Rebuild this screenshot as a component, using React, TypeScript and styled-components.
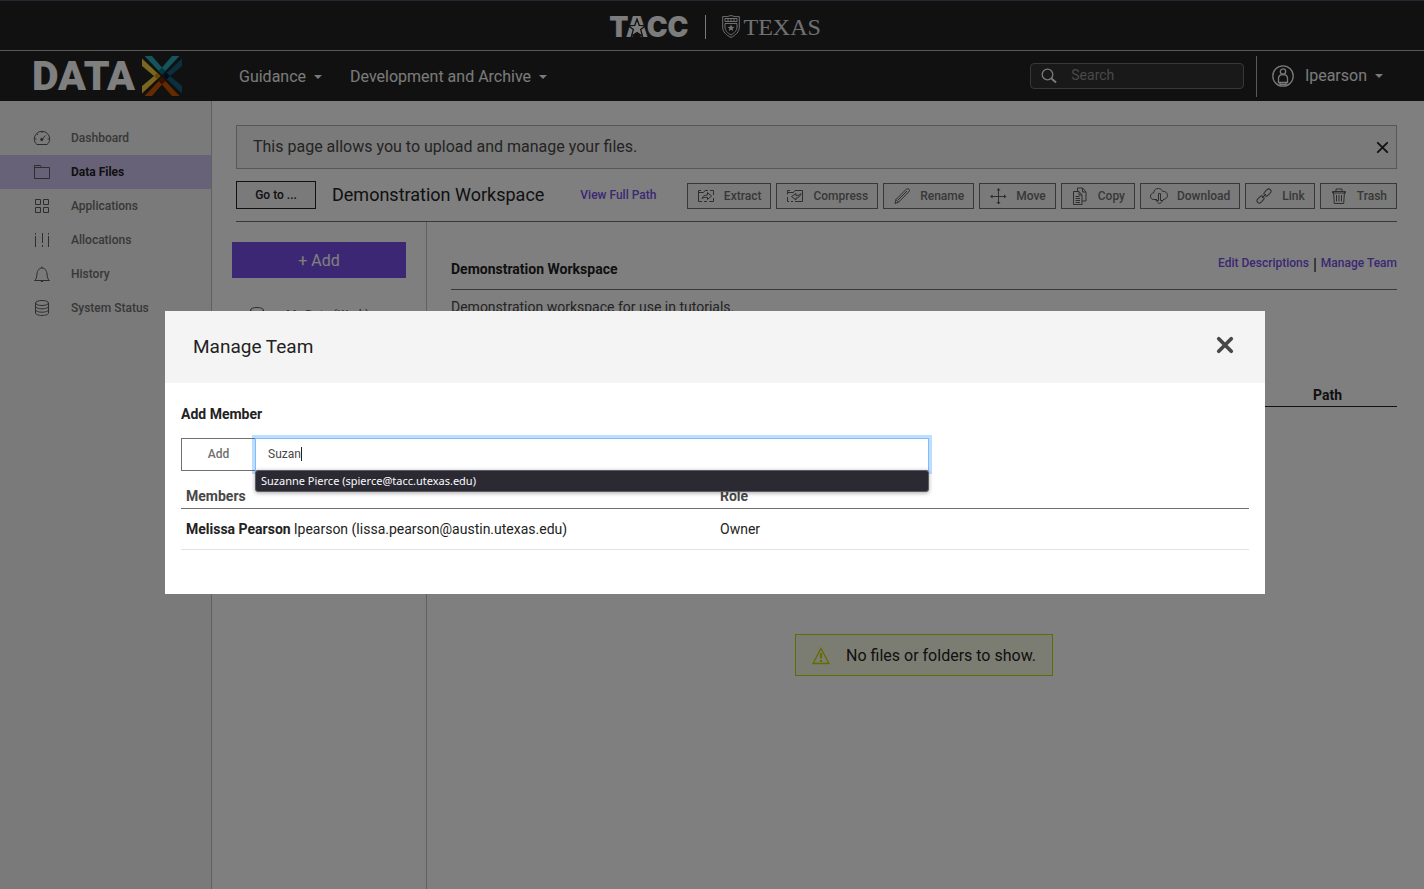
import React, { useState } from "react";
import styled, { createGlobalStyle, css } from "styled-components";

const color = {
  ink: "#222222",
  text: "#484848",
  icon: "#5c5c5c",
  muted: "#707070",
  accent: "#784fe8",
  surface: "#f4f4f4",
  active: "#d0c4f0",
  line: "#c0c0c0",
};

const GlobalStyle = createGlobalStyle`
  *, *::before, *::after { box-sizing: border-box; }
  body {
    margin: 0;
    background: #fff;
    color: ${color.text};
    font-family: Roboto, "Liberation Sans", sans-serif;
    font-size: 14px;
    line-height: 20px;
  }
  button, input { font-family: inherit; margin: 0; }
  a { text-decoration: none; }
`;

const Page = styled.div`
  display: flex;
  flex-direction: column;
  min-height: 100vh;
`;

/* ---------- Branding and navigation ---------- */

const BrandBar = styled.div`
  display: flex;
  align-items: center;
  justify-content: center;
  gap: 16px;
  height: 51px;
  padding: 2px 0 0 6px;
  background: ${color.ink};
  color: #f8f8f8;
  border-top: 1px solid #4c4c60;
  border-bottom: 1px solid #b4b4b4;
`;

const BrandRule = styled.span`
  width: 1px;
  height: 24px;
  background: #f4f4f4;
`;

const TaccLogo = styled.a`
  display: flex;
  position: relative;
  color: inherit;
  font-family: Inter, sans-serif;
  font-size: 28px;
  font-weight: 900;
  line-height: 28px;
`;

const TaccStar = styled.svg`
  position: absolute;
  left: 18px;
  top: 5px;
`;

const TexasLogo = styled.a`
  display: flex;
  align-items: center;
  gap: 4px;
  color: #e0e0e0;
  font-family: "Liberation Serif", serif;
  font-size: 24px;
  line-height: 28px;
`;

const NavBar = styled.header`
  display: flex;
  align-items: center;
  height: 50px;
  padding: 0 41px 0 32px;
  background: ${color.ink};
  color: #f4f4f4;
`;

const SiteLogo = styled.a`
  display: flex;
  align-items: center;
  width: 207px;
  color: #fff;
  font-size: 41px;
  font-weight: 900;
  line-height: 48px;
`;

const SiteMark = styled.svg`
  margin-left: 7px;
`;

const NavLinks = styled.nav`
  display: flex;
  flex: 1;
  gap: 28px;
  padding-top: 2px;
`;

const NavLink = styled.button`
  display: flex;
  align-items: center;
  gap: 8px;
  padding: 0;
  border: 0;
  background: none;
  color: inherit;
  font-size: 16px;
  line-height: 24px;
`;

const Caret = styled.span`
  border: 4px solid transparent;
  border-top-color: currentColor;
  border-bottom: 0;
`;

const SearchBox = styled.label`
  display: flex;
  align-items: center;
  gap: 14px;
  width: 214px;
  height: 26px;
  padding: 0 10px;
  border: 1px solid #707070;
  border-radius: 4px;
  background: #333;
`;

const SearchInput = styled.input`
  flex: 1;
  min-width: 0;
  padding: 0 0 2px;
  border: 0;
  outline: 0;
  background: none;
  color: #fff;
  font-size: 14px;
  line-height: 20px;
  &::placeholder { color: #929292; opacity: 1; }
`;

const UserArea = styled.div`
  display: flex;
  align-items: center;
  height: 41px;
  margin-left: 12px;
  padding-left: 15px;
  border-left: 1px solid #b4b4b4;
`;

const UserButton = styled(NavLink)`
  svg { margin-right: 3px; }
`;

/* ---------- Workbench ---------- */

const Workbench = styled.div`
  display: flex;
  flex: 1;
`;

const Sidebar = styled.nav`
  flex: 0 0 212px;
  padding-top: 20px;
  background: ${color.surface};
  border-right: 1px solid ${color.line};
`;

const SidebarLink = styled.a<{ $active?: boolean }>`
  display: flex;
  align-items: center;
  gap: 20px;
  height: 34px;
  padding-left: 33px;
  color: ${color.muted};
  font-size: 12px;
  font-weight: 500;
  ${(p) => p.$active && css`
    background: ${color.active};
    color: ${color.ink};
    font-weight: 700;
  `}
`;

const Main = styled.main`
  display: flex;
  flex: 1;
  flex-direction: column;
  min-width: 0;
  padding: 24px 27px 0 20px;
`;

const MainHeader = styled.div`
  margin-left: 4px;
  border-bottom: 1px solid ${color.muted};
`;

const IntroMessage = styled.div`
  display: flex;
  align-items: center;
  justify-content: space-between;
  height: 44px;
  padding: 0 6px 0 16px;
  border: 1px solid #afafaf;
  background: ${color.surface};
  font-size: 16px;
  line-height: 24px;
`;

const CloseButton = styled.button<{ $tone?: string }>`
  display: flex;
  padding: 0;
  border: 0;
  background: none;
  color: ${(p) => p.$tone ?? color.ink};
`;

const TitleRow = styled.div`
  display: flex;
  align-items: flex-end;
  padding: 12px 0;
`;

const GoToButton = styled.button`
  width: 80px;
  height: 28px;
  padding: 0;
  border: 1px solid ${color.ink};
  background: ${color.surface};
  color: ${color.ink};
  font-size: 12px;
  font-weight: 500;
`;

const WorkspaceTitle = styled.h1`
  margin: 0 36px 0 16px;
  color: ${color.ink};
  font-size: 18px;
  font-weight: 400;
  line-height: 28px;
  white-space: nowrap;
`;

const TextLink = styled.a`
  color: ${color.accent};
  font-size: 12px;
  font-weight: 500;
  line-height: 28px;
  white-space: nowrap;
`;

const Toolbar = styled.div`
  display: flex;
  gap: 5px;
  margin-left: auto;
`;

const ToolButton = styled.button`
  display: flex;
  align-items: center;
  gap: 9px;
  height: 26px;
  padding: 0 9px;
  border: 1px solid ${color.muted};
  background: ${color.surface};
  color: ${color.muted};
  font-size: 12px;
  font-weight: 500;
  white-space: nowrap;
`;

const Columns = styled.div`
  display: flex;
  flex: 1;
`;

const SystemsColumn = styled.div`
  flex: 0 0 195px;
  padding: 20px 20px 0 0;
  border-right: 1px solid ${color.line};
`;

const AddButton = styled.button`
  display: block;
  width: 100%;
  height: 36px;
  border: 0;
  background: ${color.accent};
  color: #fff;
  font-size: 16px;
`;

const SystemLink = styled.a`
  display: flex;
  align-items: center;
  gap: 20px;
  height: 34px;
  margin-top: 20px;
  padding-left: 16px;
  color: ${color.muted};
  font-size: 12px;
  font-weight: 500;
`;

const FilesColumn = styled.section`
  flex: 1;
  min-width: 0;
  padding: 30px 0 0 24px;
`;

const ProjectHeader = styled.div`
  display: flex;
  align-items: flex-start;
  justify-content: space-between;
  height: 38px;
  border-bottom: 1px solid ${color.muted};
`;

const ProjectTitle = styled.h2`
  margin: 7px 0 0;
  color: ${color.ink};
  font-size: 14px;
  font-weight: 700;
  line-height: 20px;
`;

const ProjectLinks = styled.div`
  display: flex;
  gap: 4px;
  color: ${color.ink};
  font-size: 16px;
  line-height: 26px;
  ${TextLink} { line-height: 22px; }
`;

const Description = styled.p`
  margin: 7px 0 68px;
`;

const FilesTable = styled.table`
  width: 100%;
  border-collapse: collapse;
  th {
    width: 84px;
    padding: 0 0 1px;
    border-bottom: 1px solid ${color.ink};
    color: ${color.ink};
    font-weight: 700;
    text-align: left;
  }
  td { padding: 0; border-bottom: 1px solid ${color.ink}; }
`;

const EmptyNotice = styled.div`
  display: flex;
  align-items: center;
  gap: 16px;
  width: max-content;
  height: 42px;
  margin: 227px auto 0;
  padding: 2px 16px 0;
  border: 1px solid #c4d600;
  background: #f9fbe5;
  color: ${color.ink};
  font-size: 16px;
`;

/* ---------- Dialog ---------- */

const Backdrop = styled.div`
  position: fixed;
  inset: 0;
  display: flex;
  align-items: center;
  justify-content: center;
  padding: 16px 0 0 6px;
  background: rgba(0, 0, 0, 0.5);
`;

const Dialog = styled.section`
  width: 100%;
  max-width: 1100px;
  background: #fff;
`;

const DialogHeader = styled.header`
  display: flex;
  align-items: center;
  justify-content: space-between;
  height: 72px;
  padding: 0 30px 4px 28px;
  background: ${color.surface};
  h2 {
    margin: 4px 0 0;
    color: ${color.ink};
    font-size: 19px;
    font-weight: 400;
    line-height: 28px;
  }
`;

const DialogBody = styled.div`
  padding: 21px 16px 44px;
`;

const FieldLabel = styled.label`
  display: block;
  margin-bottom: 14px;
  color: ${color.ink};
  font-weight: 700;
`;

const InputGroup = styled.div`
  display: flex;
  width: 70%;
  height: 33px;
`;

const AddMemberButton = styled.button`
  width: 75px;
  margin-right: -1px;
  border: 1px solid ${color.muted};
  background: #fff;
  color: ${color.muted};
  font-size: 12px;
  font-weight: 500;
`;

const InputWrap = styled.div`
  position: relative;
  flex: 1;
`;

const MemberInput = styled.input`
  display: block;
  width: 100%;
  height: 33px;
  padding: 0 12px;
  border: 1px solid #80bdff;
  outline: 0;
  box-shadow: 0 0 0 3px rgba(0, 123, 255, 0.25);
  caret-color: transparent;
  color: ${color.text};
  font-size: 12px;
`;

const TextCaret = styled.span`
  position: absolute;
  top: 9px;
  left: 46px;
  width: 1px;
  height: 14px;
  background: ${color.ink};
`;

const Suggestions = styled.ul`
  position: absolute;
  top: 32px;
  left: 0;
  right: 0;
  margin: 0;
  padding: 0 5px;
  list-style: none;
  border: 1px solid #5c5b66;
  border-radius: 3px;
  background: #2b2a33;
  box-shadow: 0 1px 4px rgba(0, 0, 0, 0.35);
  color: #fbfbfe;
  font-family: "Noto Sans", sans-serif;
  font-size: 11px;
  line-height: 20px;
`;

const MembersTable = styled.table`
  width: 100%;
  margin-top: 12px;
  border-collapse: collapse;
  table-layout: fixed;
  th {
    height: 26px;
    padding: 0 5px;
    border-bottom: 1px solid ${color.muted};
    font-weight: 700;
    text-align: left;
  }
  td {
    height: 41px;
    padding: 0 5px;
    border-bottom: 1px solid #e2e2e2;
    color: ${color.ink};
  }
`;

/* ---------- Icons ---------- */

const paths: Record<string, React.ReactNode> = {
  dashboard: (
    <>
      <path d="M4 15.500h10c1.800-1.500 2.700-3 2.700-5.500A7.700 7.700 0 0 0 1.300 10c0 2.500.9 4 2.700 5.500z" />
      <path d="M8.500 11 12.500 6.500M9 2.500v1.500M4 5l1 1M2 10h1.500M14.500 10H16" />
      <circle cx="8.800" cy="10.500" r="1.200" fill="currentColor" />
    </>
  ),
  folder: <path d="M1.500 15.500v-13h6l1 2h8v11zM1.500 4.500h7" />,
  apps: <path d="M2.500 2.500h5v5h-5zM10.500 2.500h5v5h-5zM2.500 10.500h5v5h-5zM10.500 10.500h5v5h-5z" />,
  allocations: (
    <path d="M2.500 5v11M9.500 2v10M15.500 5v11M2.500 2v1.500M9.500 14v2M15.500 2v1.500" />
  ),
  bell: <path d="M1.500 15.500h15c-2-1.500-2-3-2.500-6.500-.4-3.500-2-6-5-6s-4.600 2.500-5 6c-.5 3.500-.5 5-2.500 6.500zM7.800 16.500h2.400M9 1.500v1.500" />,
  database: (
    <>
      <ellipse cx="9" cy="4" rx="6.500" ry="2.500" />
      <path d="M2.500 4v10c0 1.400 2.900 2.500 6.500 2.500s6.500-1.100 6.500-2.500V4M2.500 7.300c0 1.400 2.900 2.500 6.500 2.500s6.500-1.100 6.500-2.500M2.500 10.700c0 1.400 2.900 2.500 6.500 2.500s6.500-1.100 6.500-2.500" />
    </>
  ),
  extract: (
    <>
      <path d="M4 3.500H1.500v11H5M7 14.500h3M12.500 14.500h4V11M16.500 8V3.500H13M11 3.500H8L6.500 5.500h-5" />
      <path d="M5 11.500c1-2.500 2.500-3.500 5.500-3.500V5.500L14.500 9l-4 3.500V10.500c-2.500-.3-4 0-5.500 1z" />
    </>
  ),
  compress: (
    <>
      <path d="M4 3.500H1.500v4M1.500 10v4.500H3M5 14.500h2M9 14.500h7.500v-11H9L7.500 5.500h-6" />
      <path d="M15 6.500c-1 1.500-2.500 2-5 2V6.500L5.500 9.500l4.500 3.500v-2c2.500-.2 4-1.500 5-4.500z" />
    </>
  ),
  rename: <path d="M2 16.500 3 12.500 13.300 2.200c.8-.8 2-.6 2.600 0s.7 1.700 0 2.500L5.500 15.200zM3 12.500l2.500 2.700M5 13 14 4" />,
  move: (
    <>
      <path d="M9.500 2v14M2 9.500h15" />
      <path d="M7.500 3.500l2-2.500 2 2.500zM7.500 15l2 2.500 2-2.500zM3.500 7.500L1 9.500l2.500 2zM15 7.500l2.500 2-2.500 2z" fill="currentColor" stroke="none" />
    </>
  ),
  copy: (
    <>
      <path d="M2.500 4.500h5.500l3 3.500v9.500H2.500zM8 4.500V8h3" />
      <path d="M6.500 4.500v-3.500h5l3.500 4v9H11M11.500 1v4H15M4.500 9.500h4M4.500 11.500h4.500M4.500 13.500h4.500M4.500 15.500h4.500" />
    </>
  ),
  download: (
    <>
      <path d="M7 12.500H4C1 12.500.4 10.500.5 9c.2-1.800 1.500-3 3-3 .5-3 2.500-4.700 5-4.500 2 0 3.500 1.200 4.200 3 2.300-.5 4.800 1 4.800 4 0 2-1.700 4-4.500 4" />
      <path d="M8.500 6.500h2v7H13l-3.500 3.500L6 13.500h2.500z" />
    </>
  ),
  link: (
    <>
      <rect x="-4" y="-2.300" width="8" height="4.600" rx="2.300" transform="translate(12.500 5.500) rotate(-45)" />
      <rect x="-4" y="-2.300" width="8" height="4.600" rx="2.300" transform="translate(5.500 12.500) rotate(-45)" />
      <path d="M7 11l4-4" />
    </>
  ),
  trash: <path d="M2.500 4.500h13M3.500 4.500l.8 12h9.400l.8-12M6 4.500v-2.500h6v2.500M2.500 4.500v1.500h13V4.500M6.500 8v6.500M9 8v6.500M11.500 8v6.500" />,
};

function Icon({ name }: { name: string }) {
  return (
    <svg width="18" height="18" viewBox="0 0 18 18" color={color.icon} fill="none" stroke="currentColor" aria-hidden="true">
      {paths[name]}
    </svg>
  );
}

function Cross({ size, weight }: { size: number; weight: number }) {
  return (
    <svg
      width={size}
      height={size}
      viewBox="0 0 16 16"
      stroke="currentColor"
      strokeWidth={weight}
      strokeLinecap="round"
      aria-hidden="true"
    >
      <path d="M3 3 13 13M13 3 3 13" />
    </svg>
  );
}

function DataXMark() {
  return (
    <SiteMark width="40" height="40" viewBox="0 0 40 40" aria-hidden="true">
      <path d="M2.500 0H10l10 11.500L30 0h7.500L20 18.500z" fill="#28a8b4" />
      <path d="M2.500 40H10l10-11.500L30 40h7.500L20 21.500z" fill="#c85400" />
      <path d="M0 2.500 18.500 20 0 37.500V30l12-10L0 10z" fill="#f4cc40" />
      <path d="M40 2.500 21.500 20 40 37.500V30L28 20l12-10z" fill="#146080" />
      <path d="M20 11.500l3.500 3.500-3.500 3.500-3.500-3.500z" fill="#007080" />
      <path d="M20 21.500l3.500 3.500-3.500 3.500-3.500-3.500z" fill="#781c00" />
      <path d="M15.300 16.800l3.200 3.200-3.200 3.200L12 20z" fill="#d08c00" />
      <path d="M24.700 16.800L28 20l-3.300 3.200-3.200-3.200z" fill="#001838" />
    </SiteMark>
  );
}

function Shield() {
  return (
    <svg width="18" height="23" viewBox="0 0 18 23" fill="none" stroke="currentColor" aria-hidden="true">
      <path d="M.7 1.500c3 .4 5.500 0 8.300-1 2.800 1 5.300 1.400 8.300 1V12c0 5-3.500 8-8.300 10.500C4.200 20 .7 17 .7 12z" />
      <path d="M3 8.500h12V12c0 3.500-2.500 6-6 8-3.500-2-6-4.500-6-8zM3 3.500h12v3H3z" />
      <path d="M6 3v4M9 3v4M12 3v4" />
      <path d="m9 9.500 1 2.300 2.500.2-1.900 1.600.6 2.500L9 14.800l-2.200 1.300.6-2.500L5.500 12l2.500-.2z" fill="currentColor" stroke="none" />
    </svg>
  );
}

const sections = [
  ["Dashboard", "dashboard"],
  ["Data Files", "folder"],
  ["Applications", "apps"],
  ["Allocations", "allocations"],
  ["History", "bell"],
  ["System Status", "database"],
];

const tools = ["Extract", "Compress", "Rename", "Move", "Copy", "Download", "Link", "Trash"];

function ManageTeamDialog() {
  const [query, setQuery] = useState("Suzan");
  return (
    <Backdrop>
      <Dialog role="dialog" aria-modal="true" aria-labelledby="dialog-title">
        <DialogHeader>
          <h2 id="dialog-title">Manage Team</h2>
          <CloseButton aria-label="Close" $tone={color.text}>
            <Cross size={20} weight={3} />
          </CloseButton>
        </DialogHeader>
        <DialogBody>
          <FieldLabel htmlFor="member">Add Member</FieldLabel>
          <InputGroup>
            <AddMemberButton>Add</AddMemberButton>
            <InputWrap>
              <MemberInput id="member" autoComplete="off" value={query} onChange={(e) => setQuery(e.target.value)} />
              <TextCaret />
              <Suggestions>
                <li>Suzanne Pierce (spierce@tacc.utexas.edu)</li>
              </Suggestions>
            </InputWrap>
          </InputGroup>
          <MembersTable>
            <thead>
              <tr>
                <th>Members</th>
                <th>Role</th>
              </tr>
            </thead>
            <tbody>
              <tr>
                <td>
                  <strong>Melissa Pearson</strong> lpearson (lissa.pearson@austin.utexas.edu)
                </td>
                <td>Owner</td>
              </tr>
            </tbody>
          </MembersTable>
        </DialogBody>
      </Dialog>
    </Backdrop>
  );
}

export default function App() {
  return (
    <>
      <GlobalStyle />
      <Page>
        <BrandBar>
          <TaccLogo href="#">
            TACC
            <TaccStar width="20" height="20" viewBox="0 0 18 18" aria-hidden="true">
              <path
                d="m9 1 2 5.600 6 .2-4.700 3.600L14 16.500 9 13l-5 3.500 1.700-6.100L1 6.800l6-.2z"
                fill="currentColor"
                stroke={color.ink}
                strokeWidth="1.200"
              />
            </TaccStar>
          </TaccLogo>
          <BrandRule />
          <TexasLogo href="#">
            <Shield />
            TEXAS
          </TexasLogo>
        </BrandBar>
        <NavBar>
          <SiteLogo href="#">
            DATA
            <DataXMark />
          </SiteLogo>
          <NavLinks>
            <NavLink>
              Guidance
              <Caret />
            </NavLink>
            <NavLink>
              Development and Archive
              <Caret />
            </NavLink>
          </NavLinks>
          <SearchBox>
            <svg width="16" height="16" viewBox="0 0 16 16" fill="none" stroke="currentColor" aria-hidden="true">
              <circle cx="6.500" cy="6.500" r="5.300" strokeWidth="1.300" />
              <path d="m10.500 10.500 4.500 4" strokeWidth="2" />
            </svg>
            <SearchInput placeholder="Search" aria-label="Search" />
          </SearchBox>
          <UserArea>
            <UserButton>
              <svg width="22" height="22" viewBox="0 0 22 22" fill="none" stroke="currentColor" strokeWidth="1.300" aria-hidden="true">
                <circle cx="11" cy="11" r="10.200" />
                <circle cx="11" cy="6.500" r="2.700" />
                <path d="M6.500 17.500v-4c0-2.500 1.500-3.800 4.500-3.800s4.500 1.300 4.500 3.800v4zM8 17.500v2h6v-2" />
              </svg>
              lpearson
              <Caret />
            </UserButton>
          </UserArea>
        </NavBar>
        <Workbench>
          <Sidebar>
            {sections.map(([label, icon]) => (
              <SidebarLink key={label} href="#" $active={label === "Data Files"}>
                <Icon name={icon} />
                {label}
              </SidebarLink>
            ))}
          </Sidebar>
          <Main>
            <MainHeader>
              <IntroMessage>
                This page allows you to upload and manage your files.
                <CloseButton aria-label="Dismiss">
                  <Cross size={15} weight={2} />
                </CloseButton>
              </IntroMessage>
              <TitleRow>
                <GoToButton>Go to ...</GoToButton>
                <WorkspaceTitle>Demonstration Workspace</WorkspaceTitle>
                <TextLink href="#">View Full Path</TextLink>
                <Toolbar>
                  {tools.map((tool) => (
                    <ToolButton key={tool}>
                      <Icon name={tool.toLowerCase()} />
                      {tool}
                    </ToolButton>
                  ))}
                </Toolbar>
              </TitleRow>
            </MainHeader>
            <Columns>
              <SystemsColumn>
                <AddButton>+ Add</AddButton>
                <SystemLink href="#">
                  <Icon name="database" />
                  My Data (Work)
                </SystemLink>
              </SystemsColumn>
              <FilesColumn>
                <ProjectHeader>
                  <ProjectTitle>Demonstration Workspace</ProjectTitle>
                  <ProjectLinks>
                    <TextLink href="#">Edit Descriptions</TextLink>|<TextLink href="#">Manage Team</TextLink>
                  </ProjectLinks>
                </ProjectHeader>
                <Description>Demonstration workspace for use in tutorials.</Description>
                <FilesTable>
                  <thead>
                    <tr>
                      <td />
                      <th>Path</th>
                    </tr>
                  </thead>
                </FilesTable>
                <EmptyNotice>
                  <svg width="18" height="18" viewBox="0 0 18 18" fill="none" stroke="#c4d600" strokeWidth="1.300" aria-hidden="true">
                    <path d="M9 1.500 17 16.500H1z" />
                    <path d="M9 6v5.500M9 13v2" strokeWidth="2" />
                  </svg>
                  No files or folders to show.
                </EmptyNotice>
              </FilesColumn>
            </Columns>
          </Main>
        </Workbench>
      </Page>
      <ManageTeamDialog />
    </>
  );
}
